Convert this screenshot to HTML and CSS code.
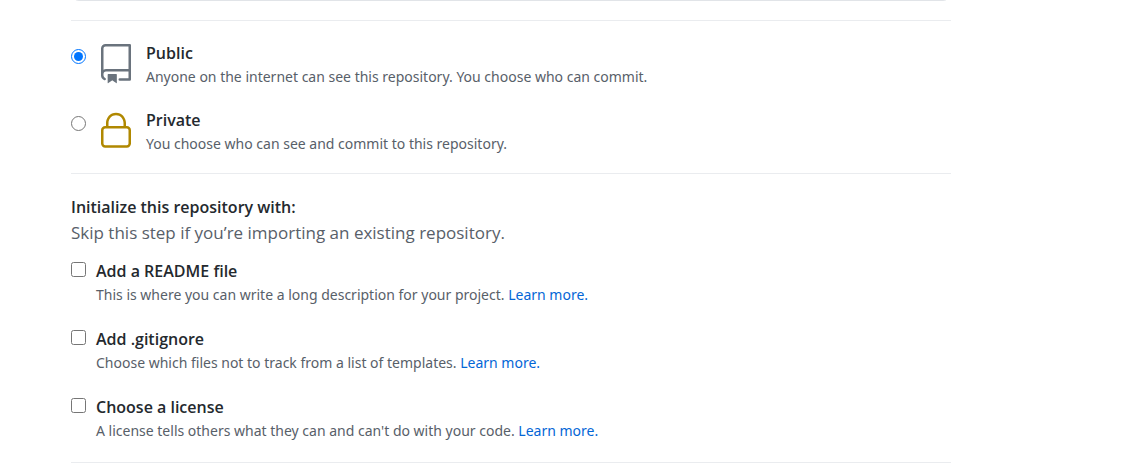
FILE: index.html
```html
<!DOCTYPE html>
<html lang="en">
<head>
<meta charset="utf-8">
<title>Create a new repository</title>
<link rel="stylesheet" href="styles.css">
</head>
<body>
<form class="form">
  <input class="description" type="text" aria-label="Description">

  <div class="section visibility">
    <div class="choice">
      <input class="control" type="radio" name="visibility" id="public" checked>
      <svg class="icon icon-repo" viewBox="0 0 24 24" aria-hidden="true"><path fill-rule="evenodd" d="M3 2.75A2.75 2.75 0 015.75 0h14.5a.75.75 0 01.75.75v20.5a.75.75 0 01-.75.75h-6a.75.75 0 010-1.5h5.25v-4H6A1.5 1.5 0 004.5 18v.75c0 .716.43 1.334 1.05 1.605a.75.75 0 01-.6 1.374A3.25 3.25 0 013 18.75v-16zM19.5 1.5V15H6c-.546 0-1.059.146-1.5.401V2.75c0-.69.56-1.25 1.25-1.25H19.5z"/><path d="M7 18.25a.25.25 0 01.25-.25h5a.25.25 0 01.25.25v5.01a.25.25 0 01-.397.201l-2.206-1.604a.25.25 0 00-.294 0L7.397 23.46a.25.25 0 01-.397-.2v-5.01z"/></svg>
      <div class="text">
        <label class="title" for="public">Public</label>
        <p class="note">Anyone on the internet can see this repository. You choose who can commit.</p>
      </div>
    </div>
    <div class="choice">
      <input class="control" type="radio" name="visibility" id="private">
      <svg class="icon icon-lock" viewBox="0 0 24 24" aria-hidden="true"><path fill-rule="evenodd" d="M6 9V7.25C6 3.845 8.503 1 12 1s6 2.845 6 6.25V9h.5a2.5 2.5 0 012.5 2.5v8a2.5 2.5 0 01-2.5 2.5h-13A2.5 2.5 0 013 19.5v-8A2.5 2.5 0 015.5 9H6zm1.5-1.75C7.5 4.58 9.422 2.5 12 2.5c2.578 0 4.5 2.08 4.5 4.75V9h-9V7.25zm-3 4.25a1 1 0 011-1h13a1 1 0 011 1v8a1 1 0 01-1 1h-13a1 1 0 01-1-1v-8z"/></svg>
      <div class="text">
        <label class="title" for="private">Private</label>
        <p class="note">You choose who can see and commit to this repository.</p>
      </div>
    </div>
  </div>

  <div class="section setup">
    <h2 class="title">Initialize this repository with:</h2>
    <p class="hint">Skip this step if you’re importing an existing repository.</p>
    <div class="options">
      <div class="option">
        <input class="control" type="checkbox" id="readme">
        <div class="text">
          <label class="title" for="readme">Add a README file</label>
          <p class="note">This is where you can write a long description for your project. <a class="link" href="#">Learn more.</a></p>
        </div>
      </div>
      <div class="option">
        <input class="control" type="checkbox" id="gitignore">
        <div class="text">
          <label class="title" for="gitignore">Add .gitignore</label>
          <p class="note">Choose which files not to track from a list of templates. <a class="link" href="#">Learn more.</a></p>
        </div>
      </div>
      <div class="option">
        <input class="control" type="checkbox" id="license">
        <div class="text">
          <label class="title" for="license">Choose a license</label>
          <p class="note">A license tells others what they can and can't do with your code. <a class="link" href="#">Learn more.</a></p>
        </div>
      </div>
    </div>
  </div>
</form>
</body>
</html>
```
FILE: styles.css
```css
* {
  box-sizing: border-box;
}

body {
  margin: 0;
  background: #fff;
  color: #24292e;
  font-family: "Segoe UI", "Noto Sans", "Open Sans", sans-serif;
  font-size: 14px;
  overflow: hidden;
}

.form {
  max-width: 951px;
  padding-left: 71px;
}

.description {
  display: block;
  width: 100%;
  height: 40px;
  margin: -39px 0 19px;
  padding: 6px 15px;
  border: 1px solid #e1e4e8;
  border-radius: 8px;
  font: inherit;
}

.section {
  border-top: 1px solid #eaecef;
}

.visibility {
  display: grid;
  gap: 19px;
  padding: 20px 0 17px;
}

.setup {
  padding: 21px 0 19px;
  border-bottom: 1px solid #eaecef;
}

.choice,
.option {
  display: flex;
  align-items: flex-start;
}

.control {
  flex: none;
  width: 15px;
  height: 15px;
  margin: 8px 10px 0 0;
  accent-color: #0075ff;
}

.option .control {
  margin-top: 3px;
}

.icon {
  flex: none;
  width: 40px;
  height: 40px;
  margin: 3px 10px 0 0;
}

.icon-repo {
  fill: #6a737d;
}

.icon-lock {
  fill: #b08800;
}

.title {
  display: block;
  margin: 0;
  font-family: "Segoe UI", "Open Sans", sans-serif;
  font-size: 16px;
  font-weight: 600;
  line-height: 24px;
}

.note {
  margin: 0;
  color: #586069;
  line-height: 24px;
}

.hint {
  margin: 0;
  color: #586069;
  font-family: "Segoe UI", "Open Sans", sans-serif;
  font-size: 17px;
  line-height: 28px;
}

.options {
  display: grid;
  gap: 20px;
  margin-top: 12px;
}

.link {
  color: #0366d6;
  text-decoration: none;
}
```
